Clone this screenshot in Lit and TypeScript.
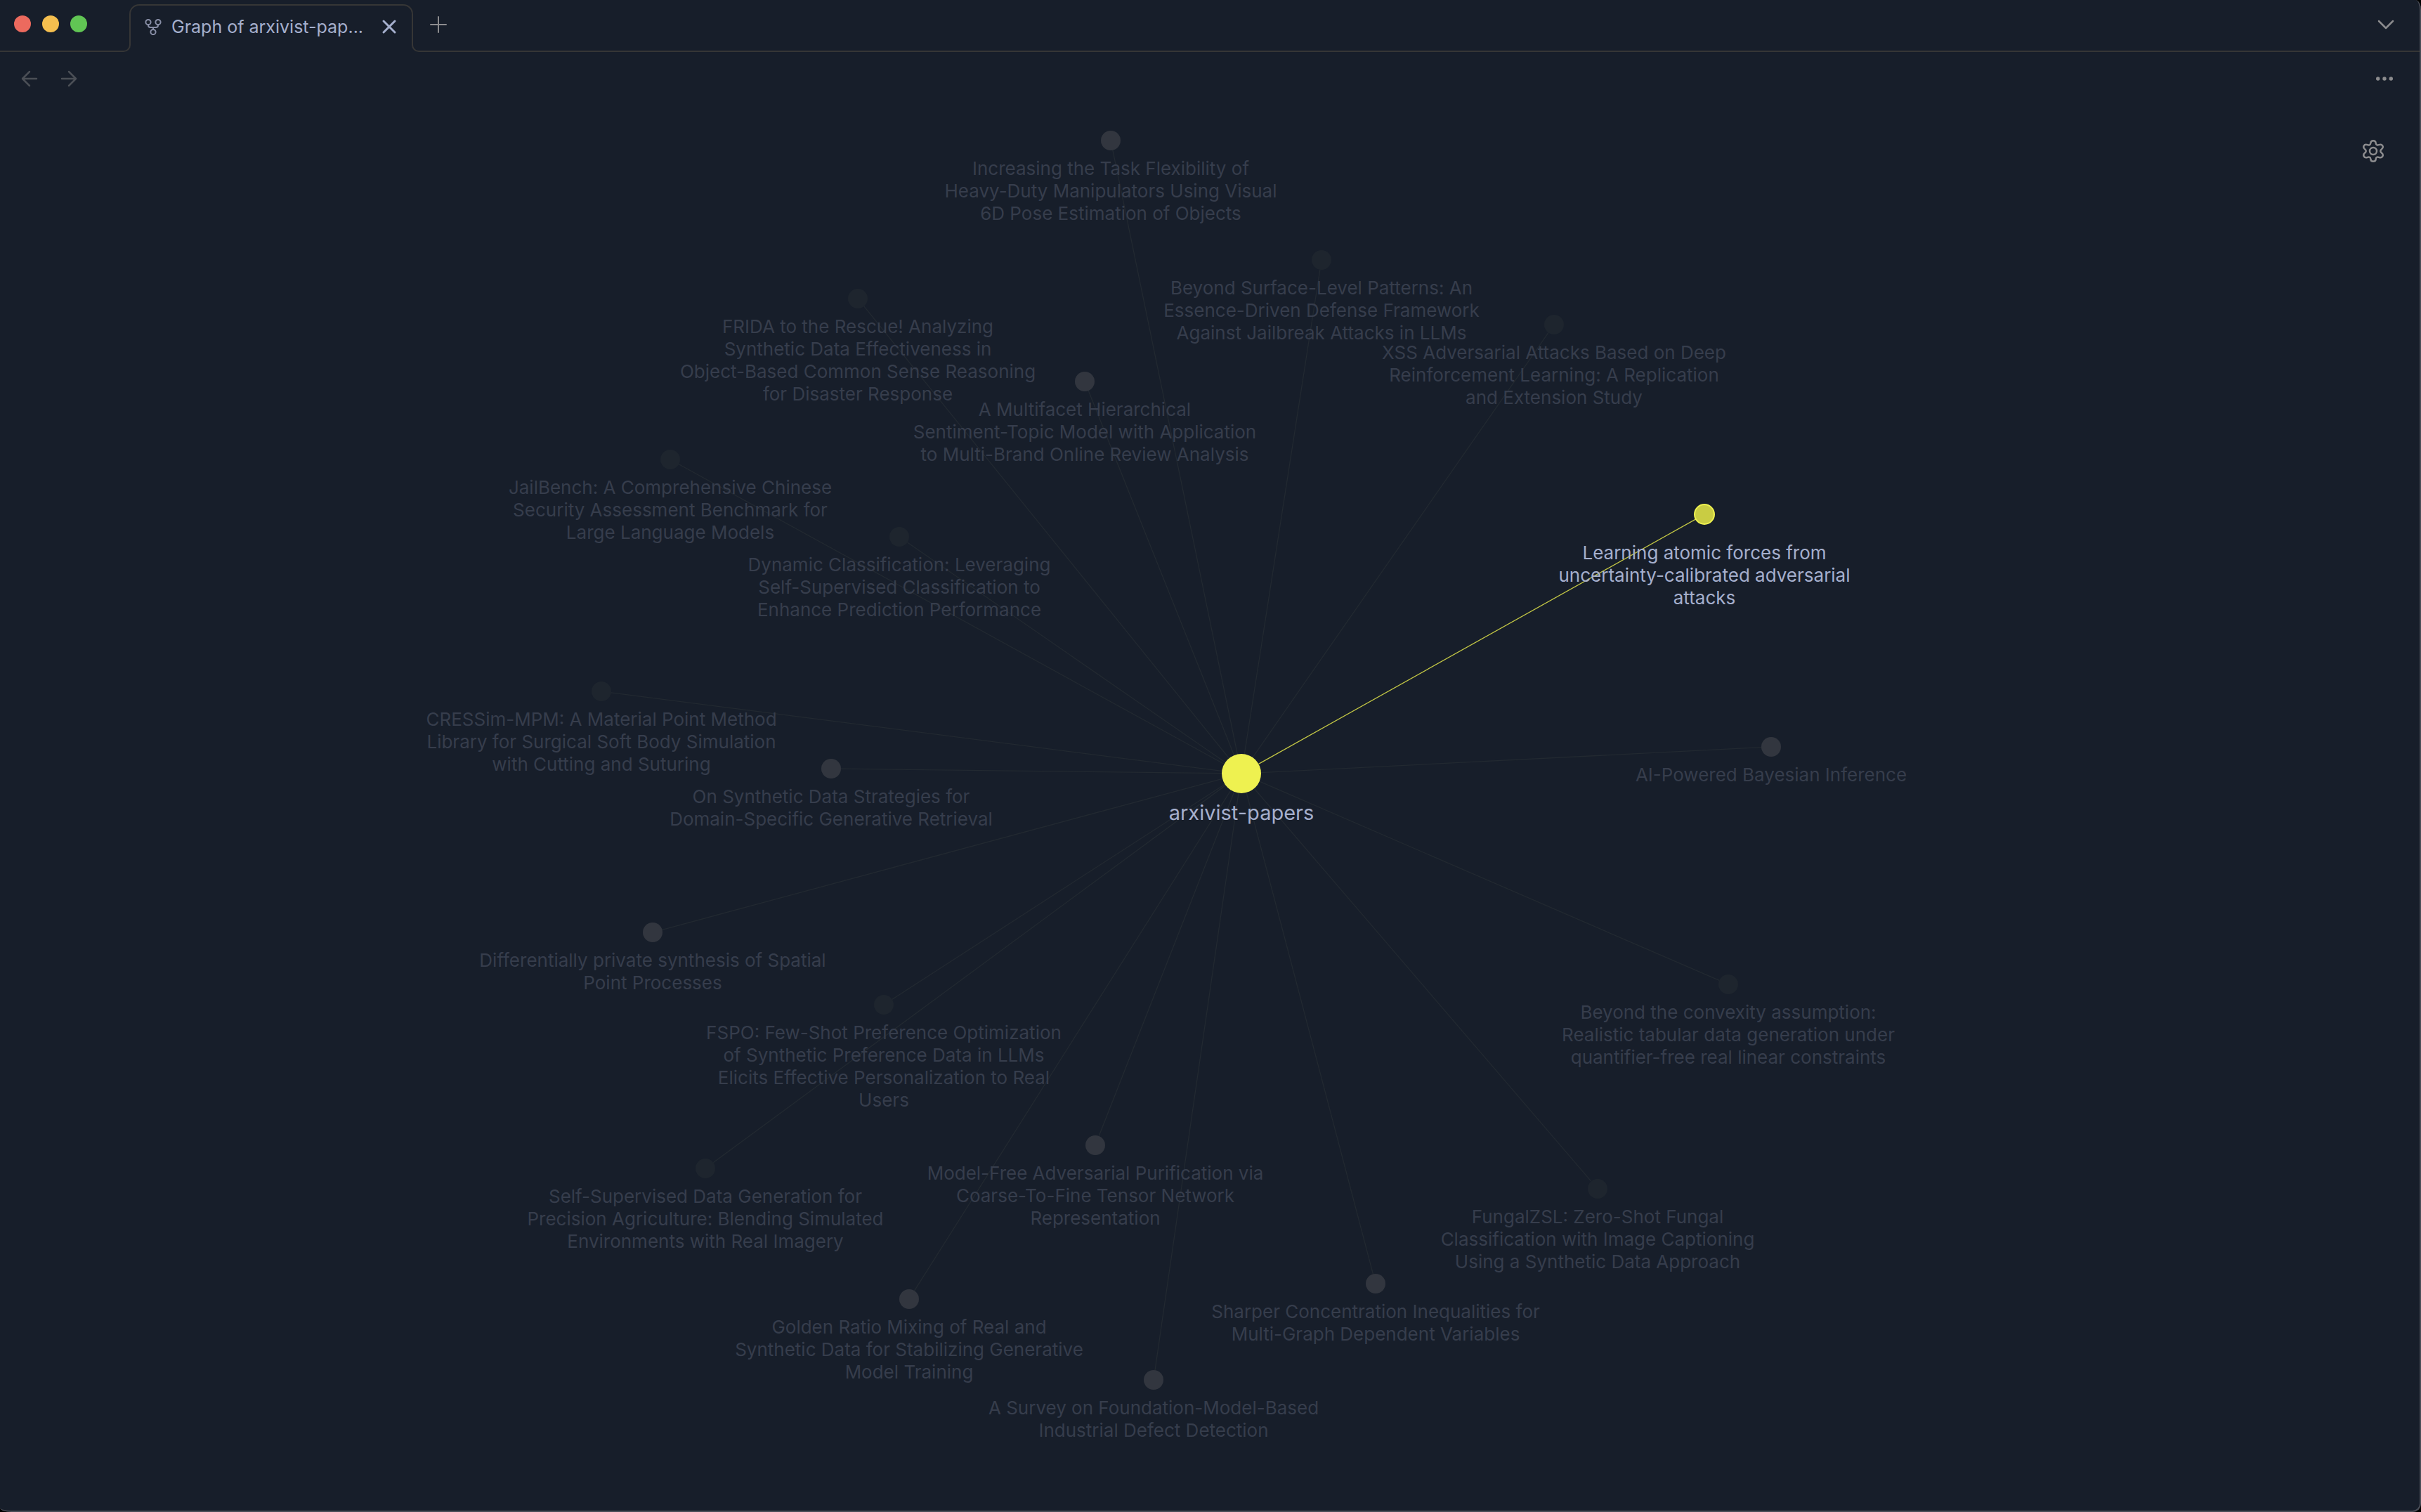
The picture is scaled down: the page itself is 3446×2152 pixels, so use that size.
import { LitElement, html, svg, css, nothing } from "lit";
import { customElement } from "lit/decorators.js";
import { classMap } from "lit/directives/class-map.js";
import { styleMap } from "lit/directives/style-map.js";

type Kind = "note" | "missing" | "active" | "hub";

interface GraphNode {
  x: number;
  y: number;
  kind: Kind;
  lines: string[];
}

/* Coordinates are relative to the hub of the graph. */
const NODES: GraphNode[] = [
  { x: -186, y: -901, kind: "note", lines: ["Increasing the Task Flexibility of", "Heavy-Duty Manipulators Using Visual", "6D Pose Estimation of Objects"] },
  { x: 114, y: -731, kind: "missing", lines: ["Beyond Surface-Level Patterns: An", "Essence-Driven Defense Framework", "Against Jailbreak Attacks in LLMs"] },
  { x: 445, y: -639, kind: "missing", lines: ["XSS Adversarial Attacks Based on Deep", "Reinforcement Learning: A Replication", "and Extension Study"] },
  { x: -546, y: -676, kind: "missing", lines: ["FRIDA to the Rescue! Analyzing", "Synthetic Data Effectiveness in", "Object-Based Common Sense Reasoning", "for Disaster Response"] },
  { x: -223, y: -558, kind: "note", lines: ["A Multifacet Hierarchical", "Sentiment-Topic Model with Application", "to Multi-Brand Online Review Analysis"] },
  { x: -813, y: -447, kind: "missing", lines: ["JailBench: A Comprehensive Chinese", "Security Assessment Benchmark for", "Large Language Models"] },
  { x: -487, y: -337, kind: "missing", lines: ["Dynamic Classification: Leveraging", "Self-Supervised Classification to", "Enhance Prediction Performance"] },
  { x: -911, y: -117, kind: "missing", lines: ["CRESSim-MPM: A Material Point Method", "Library for Surgical Soft Body Simulation", "with Cutting and Suturing"] },
  { x: -584, y: -7, kind: "note", lines: ["On Synthetic Data Strategies for", "Domain-Specific Generative Retrieval"] },
  { x: -838, y: 226, kind: "note", lines: ["Differentially private synthesis of Spatial", "Point Processes"] },
  { x: -509, y: 329, kind: "missing", lines: ["FSPO: Few-Shot Preference Optimization", "of Synthetic Preference Data in LLMs", "Elicits Effective Personalization to Real", "Users"] },
  { x: -763, y: 562, kind: "missing", lines: ["Self-Supervised Data Generation for", "Precision Agriculture: Blending Simulated", "Environments with Real Imagery"] },
  { x: -208, y: 529, kind: "note", lines: ["Model-Free Adversarial Purification via", "Coarse-To-Fine Tensor Network", "Representation"] },
  { x: -473, y: 748, kind: "note", lines: ["Golden Ratio Mixing of Real and", "Synthetic Data for Stabilizing Generative", "Model Training"] },
  { x: -125, y: 863, kind: "note", lines: ["A Survey on Foundation-Model-Based", "Industrial Defect Detection"] },
  { x: 191, y: 726, kind: "note", lines: ["Sharper Concentration Inequalities for", "Multi-Graph Dependent Variables"] },
  { x: 507, y: 591, kind: "missing", lines: ["FungalZSL: Zero-Shot Fungal", "Classification with Image Captioning", "Using a Synthetic Data Approach"] },
  { x: 693, y: 300, kind: "missing", lines: ["Beyond the convexity assumption:", "Realistic tabular data generation under", "quantifier-free real linear constraints"] },
  { x: 754, y: -38, kind: "note", lines: ["AI-Powered Bayesian Inference"] },
  { x: 659, y: -369, kind: "active", lines: ["Learning atomic forces from", "uncertainty-calibrated adversarial", "attacks"] },
  { x: 0, y: 0, kind: "hub", lines: ["arxivist-papers"] },
];

const RADIUS: Record<Kind, number> = { note: 14, missing: 14, active: 14, hub: 28 };

@customElement("graph-canvas")
export class GraphCanvas extends LitElement {
  static styles = css`
    :host {
      display: block;
      position: relative;
      overflow: hidden;
    }
    .origin {
      position: absolute;
      left: calc(50% + 45px);
      top: calc(50% - 49px);
      width: 0;
      height: 0;
    }
    .shapes {
      position: absolute;
      left: 0;
      top: 0;
      width: 1px;
      height: 1px;
      overflow: visible;
    }
    .link { stroke: #222931; stroke-width: 1.3; }
    .link.active { stroke: #c2c645; }
    .dot.note { fill: #32363f; }
    .dot.missing { fill: #1e252e; }
    .dot.active { fill: #c9cc43; stroke: #eef150; stroke-width: 2; }
    .dot.hub { fill: #eef150; }
    .label {
      position: absolute;
      width: max-content;
      transform: translateX(-50%);
      text-align: center;
      font-size: 26px;
      line-height: 32px;
      white-space: nowrap;
      color: #363d4c;
      padding-top: 24px;
    }
    .label.active { color: #a5afcd; padding-top: 39px; }
    .label.hub { color: #a5afcd; font-size: 29px; padding-top: 40px; }
    .line { display: block; }
  `;

  render() {
    return html`
      <div class="origin">
        <svg class="shapes" aria-hidden="true">
          ${NODES.map((n) => {
            if (n.kind === "hub") return nothing;
            const len = Math.hypot(n.x, n.y);
            const a = RADIUS.hub / len;
            const b = 1 - RADIUS[n.kind] / len;
            return svg`<line class=${classMap({ link: true, active: n.kind === "active" })}
              x1=${n.x * a} y1=${n.y * a} x2=${n.x * b} y2=${n.y * b} />`;
          })}
          ${NODES.map((n) => svg`<circle class="dot ${n.kind}" cx=${n.x} cy=${n.y} r=${RADIUS[n.kind]} />`)}
        </svg>
        ${NODES.map(
          (n) => html`<div class="label ${n.kind}" style=${styleMap({ left: `${n.x}px`, top: `${n.y}px` })}>
            ${n.lines.map((l) => html`<span class="line">${l}</span>`)}
          </div>`
        )}
      </div>
    `;
  }
}

@customElement("app-root")
export class AppRoot extends LitElement {
  static styles = css`
    :host {
      display: block;
      background: #000;
      font-family: Inter, "Liberation Sans", sans-serif;
    }
    * { box-sizing: border-box; }
    .window {
      position: relative;
      display: flex;
      flex-direction: column;
      height: 100vh;
      background: #171e2a;
      border: solid #4a4d57;
      border-width: 0 2px 2px 0;
      border-radius: 0 8px 12px 16px / 0 14px 12px 6px;
      overflow: hidden;
    }
    .titlebar {
      display: flex;
      flex: none;
      height: 74px;
    }
    .lead, .rest {
      display: flex;
      border-bottom: 2px solid #363636;
    }
    .lead {
      width: 176px;
      padding: 22px 0 0 20px;
      gap: 16px;
    }
    .rest {
      flex: 1;
      justify-content: space-between;
      padding: 0 28px 0 15px;
    }
    .light { width: 24px; height: 24px; border-radius: 50%; }
    .close { background: #ec6a5e; }
    .minimize { background: #f5bf4f; }
    .zoom { background: #61c554; }
    .foot {
      flex: none;
      align-self: flex-end;
      width: 10px;
      height: 12px;
      border-bottom: 2px solid #363636;
    }
    .foot.left { border-right: 2px solid #363636; border-bottom-right-radius: 10px; }
    .foot.right { border-left: 2px solid #363636; border-bottom-left-radius: 10px; }
    .tab {
      display: flex;
      align-items: center;
      width: 404px;
      margin: 6px -2px 10px -2px;
      padding: 4px 20px 0 18px;
      border: 2px solid #363636;
      border-bottom: 0;
      border-radius: 14px 14px 0 0;
      color: #a5afcd;
      font-size: 25px;
    }
    .tab-icon { width: 28px; height: 24px; color: #888ea6; flex: none; }
    .title { flex: 1; margin-left: 12px; white-space: nowrap; }
    button {
      display: grid;
      place-items: center;
      padding: 0;
      border: 0;
      background: none;
      font: inherit;
      color: #8c8c8e;
    }
    svg.i {
      display: block;
      fill: none;
      stroke: currentColor;
      stroke-width: 2;
      stroke-linecap: round;
      stroke-linejoin: round;
    }
    .tab button { color: #a5afcd; }
    .rest button { height: 70px; }
    .toolbar {
      display: flex;
      flex: none;
      align-items: center;
      justify-content: space-between;
      height: 76px;
      padding: 0 36px 0 26px;
    }
    .history { display: flex; gap: 26px; }
    .history button { color: #4b4f56; }
    .view { display: flex; flex: 1; }
    graph-canvas { flex: 1; }
    .settings { position: absolute; top: 198px; right: 48px; }
  `;

  render() {
    return html`
      <main class="window">
        <header class="titlebar">
          <div class="lead">
            <span class="light close"></span><span class="light minimize"></span><span class="light zoom"></span>
          </div>
          <span class="foot left"></span>
          <div class="tab">
            <svg class="i tab-icon" viewBox="0 0 28 24">
              <circle cx="7" cy="5.500" r="3.600" /><circle cx="21" cy="5.500" r="3.600" /><circle cx="14" cy="19.500" r="3.600" />
              <path d="M7 9v1q0 3 3 3h8q3 0 3-3V9M14 13v3" />
            </svg>
            <span class="title">Graph of arxivist-pap...</span>
            <button aria-label="Close tab">
              <svg class="i" width="24" height="24" viewBox="0 0 24 24"><path d="M4 4l16 16M20 4L4 20" stroke-width="3" /></svg>
            </button>
          </div>
          <span class="foot right"></span>
          <div class="rest">
            <button aria-label="New tab">
              <svg class="i" width="26" height="26" viewBox="0 0 26 26"><path d="M13 2v22M2 13h22" /></svg>
            </button>
            <button aria-label="Tab list">
              <svg class="i" width="40" height="40" viewBox="0 0 40 40"><path d="M10 15l10 10 10-10" stroke-width="2.5" /></svg>
            </button>
          </div>
        </header>
        <nav class="toolbar">
          <div class="history">
            <button aria-label="Back">
              <svg class="i" width="30" height="30" viewBox="0 0 30 30"><path d="M26 15H6M16 5L6 15l10 10" stroke-width="2.5" /></svg>
            </button>
            <button aria-label="Forward">
              <svg class="i" width="30" height="30" viewBox="0 0 30 30"><path d="M6 15h20M16 5l10 10-10 10" stroke-width="2.5" /></svg>
            </button>
          </div>
          <button aria-label="More options">
            <svg width="30" height="10" viewBox="0 0 30 10" fill="currentColor"><circle cx="6.700" cy="5" r="2.700" /><circle cx="16" cy="5" r="2.700" /><circle cx="25.300" cy="5" r="2.700" /></svg>
          </button>
        </nav>
        <section class="view"><graph-canvas></graph-canvas></section>
        <button class="settings" aria-label="Graph settings">
          <svg class="i" width="34" height="34" viewBox="0 0 34 34">
            <circle cx="16" cy="17" r="5" stroke-width="2.5" />
            <path stroke-width="2.5" d="M16 2.200c-2.200 0-3.500 1.400-3.700 3.500-.3 2.500-2 3.500-4.300 2.500-2.200-.9-4.200-.6-5.200 1.200-1.100 1.900-.4 3.700 1.400 5 2 1.400 2 3.800 0 5.200-1.800 1.300-2.500 3.100-1.400 5 1 1.800 3 2.100 5.200 1.200 2.300-1 4 0 4.300 2.500.2 2.100 1.500 3.500 3.700 3.500s3.500-1.400 3.700-3.500c.3-2.500 2-3.500 4.300-2.500 2.200.9 4.200.6 5.200-1.200 1.100-1.900.4-3.700-1.400-5-2-1.400-2-3.800 0-5.200 1.800-1.300 2.500-3.100 1.400-5-1-1.800-3-2.100-5.200-1.200-2.300 1-4 0-4.300-2.500-.2-2.100-1.500-3.500-3.700-3.500z" />
          </svg>
        </button>
      </main>
    `;
  }
}
